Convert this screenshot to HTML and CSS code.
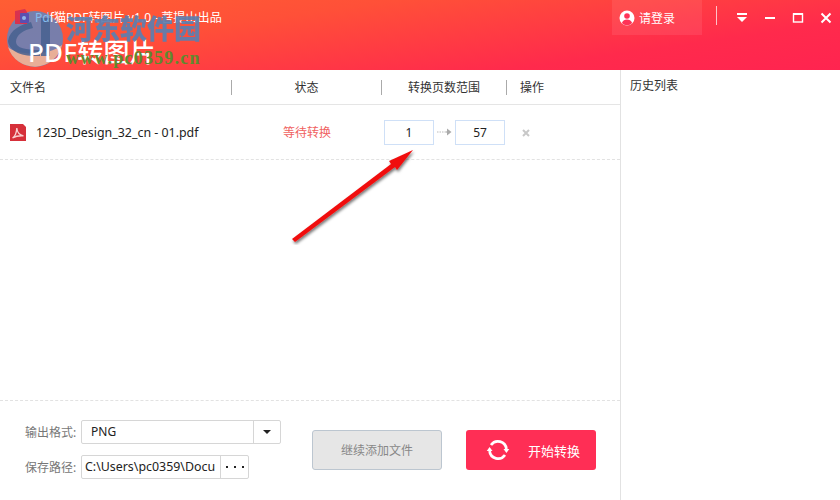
FILE: index.html
```html
<!DOCTYPE html>
<html lang="zh-CN">
<head>
  <meta charset="UTF-8" />
  <title>Pdf猫PDF转图片</title>
  <link rel="stylesheet" href="styles.css">
</head>
<body>
  <div class="window">
    <header class="titlebar">
      <div class="brand">
        <!-- site watermark logo, the app texts show through it -->
        <svg class="wm-logo" width="60" height="60" viewBox="0 0 60 60">
          <circle cx="30" cy="30" r="28" fill="#5a88c4" opacity=".82"/>
          <path d="M3 38c8 8 40 10 54-2A28 28 0 0 1 3 38z" fill="#f8b594" opacity=".88"/>
          <path d="M3 32C5 20 16 16 26 13l2 6C18 21 11 26 11 33c0 6 10 8 24 8v6C16 48 4 42 3 32z" fill="#46608f" opacity=".85"/>
          <rect x="36" y="9" width="9" height="38" fill="#46608f" opacity=".85"/>
        </svg>
        <div class="app-name">
          <svg class="app-icon" width="17" height="18" viewBox="0 0 17 18"><path d="M1 3l10-2 2 3v12H1z" fill="#d8324f"/><rect x="6" y="5" width="9" height="10" rx="1" fill="#5a4fb0"/><circle cx="10" cy="10" r="2" fill="#8fb4e8"/></svg>
          <span><span class="name-tint">Pd</span>f猫PDF转图片 v1.0 - 菩提山出品</span>
        </div>
        <div class="app-title">PDF转图片</div>
      </div>
      <div class="top-actions">
        <div class="login">
          <svg width="16" height="16" viewBox="0 0 16 16"><circle cx="8" cy="8" r="7.5" fill="#fff"/><circle cx="8" cy="6" r="2.8" fill="#ff3357"/><path d="M2.8 13c1-2.6 3-3.6 5.2-3.6s4.200 1 5.200 3.600A7 7 0 0 1 2.800 13z" fill="#ff3357"/></svg>
          <span>请登录</span>
        </div>
        <div class="divider"></div>
        <div class="win-btns">
          <svg width="14" height="14" viewBox="0 0 14 14"><rect x="2" y="2" width="10" height="2" fill="#fff"/><path d="M2 6h10l-5 5z" fill="#fff"/></svg>
          <svg width="14" height="14" viewBox="0 0 14 14"><rect x="2" y="6" width="10" height="2" fill="#fff"/></svg>
          <svg width="14" height="14" viewBox="0 0 14 14"><rect x="2.500" y="3" width="9" height="8" fill="none" stroke="#fff" stroke-width="1.400"/><rect x="2" y="2" width="10" height="2" fill="#fff"/></svg>
          <svg width="14" height="14" viewBox="0 0 14 14"><path d="M2.500 2.500l9 9M11.500 2.500l-9 9" stroke="#fff" stroke-width="2" fill="none"/></svg>
        </div>
      </div>
    </header>

    <div class="content">
      <main class="main">
        <div class="table-head">
          <div class="col-name">文件名</div>
          <div class="col-status">状态</div>
          <div class="col-range">转换页数范围</div>
          <div class="col-op">操作</div>
        </div>
        <div class="file-row">
          <div class="col-name file-name">
            <svg class="pdf-icon" width="16" height="17" viewBox="0 0 16 17"><path d="M0 0h13l3 3v14H0z" fill="#d6303a"/><path d="M2.500 14c2.500-1.500 4-5.500 4.300-10 .3 3.500 2.500 7 6.700 7.800-3.500-.2-7.500.2-11 2.200z" fill="none" stroke="#f9d0d0" stroke-width="1.300"/></svg>
            <span>123D_Design_32_cn - 01.pdf</span>
          </div>
          <div class="col-status waiting">等待转换</div>
          <div class="col-range range">
            <div class="page-box">1</div>
            <svg width="15" height="8" viewBox="0 0 15 8"><path d="M0 4h9" stroke="#bbb" stroke-width="1" stroke-dasharray="1.500 1"/><path d="M9 4h3" stroke="#999"/><path d="M10 .5l4.500 3.500-4.500 3.500z" fill="#aaa"/></svg>
            <div class="page-box">57</div>
          </div>
          <div class="col-op op-cell">
            <svg width="8" height="8" viewBox="0 0 8 8"><path d="M1 1l6 6M7 1l-6 6" stroke="#c8c8c8" stroke-width="2"/></svg>
          </div>
        </div>
        <div class="spacer"></div>
        <div class="footer">
          <div class="fields">
            <div class="field">
              <label>输出格式:</label>
              <div class="select">
                <span class="select-value">PNG</span>
                <span class="select-arrow"></span>
              </div>
            </div>
            <div class="field">
              <label>保存路径:</label>
              <div class="path">
                <span class="path-value">C:\Users\pc0359\Docu</span>
                <span class="path-more">
                  <svg width="18" height="2" viewBox="0 0 18 2"><rect x="0" y="0" width="2" height="2" fill="#222"/><rect x="8" y="0" width="2" height="2" fill="#222"/><rect x="16" y="0" width="2" height="2" fill="#222"/></svg>
                </span>
              </div>
            </div>
          </div>
          <button class="btn-add">继续添加文件</button>
          <button class="btn-start">
            <svg width="24" height="24" viewBox="0 0 24 24"><path d="M5 7A8.500 8.500 0 0 1 20.400 11" fill="none" stroke="#fff" stroke-width="2.700"/><path d="M17.500 11h5.800l-2.900 4z" fill="#fff"/><path d="M3.600 13A8.500 8.500 0 0 0 19 17" fill="none" stroke="#fff" stroke-width="2.700"/><path d="M.7 13h5.800l-2.900-4z" fill="#fff"/></svg>
            <span>开始转换</span>
          </button>
        </div>
      </main>
      <aside class="history">历史列表</aside>
    </div>

    <!-- annotation arrow on top of the screenshot -->
    <svg class="arrow" width="150" height="110" viewBox="0 0 150 110">
      <defs><filter id="soft" x="-20%" y="-20%" width="140%" height="140%"><feDropShadow dx="1" dy="2" stdDeviation="1.500" flood-color="#000" flood-opacity=".55"/></filter></defs>
      <path d="M11 104L110 29L108 26L132 15L116 35L114 32L14 107Z" fill="#f01010" filter="url(#soft)"/>
    </svg>

    <!-- site watermark text -->
    <div class="watermark">
      <div class="wm-name">河东软件园</div>
      <div class="wm-url">www.pc0359.cn</div>
    </div>
  </div>
</body>
</html>
```
FILE: styles.css
```css
* {
  box-sizing: border-box;
  margin: 0;
  padding: 0;
}

body {
  width: 840px;
  height: 500px;
  overflow: hidden;
  background: #fff;
  font-family: "Noto Sans", "Noto Sans CJK SC", sans-serif;
  font-size: 12px;
  color: #333;
}

.window {
  position: relative;
  width: 840px;
  height: 500px;
  display: flex;
  flex-direction: column;
}

.titlebar {
  height: 70px;
  flex: none;
  display: flex;
  justify-content: space-between;
  background: linear-gradient(172deg, #ff5e33 0%, #ff5038 30%, #ff2a4c 75%, #ff2450 100%);
  color: #fff;
}

.brand {
  padding: 7px 0 0 14px;
}

.app-name {
  position: relative;
  display: flex;
  align-items: center;
  gap: 4px;
  height: 20px;
  font-size: 12.100px;
  color: #fff;
}

.name-tint {
  color: #86bdec;
}

.app-title {
  position: relative;
  margin: 9px 0 0 14px;
  font-size: 26px;
  line-height: 32px;
  font-weight: 500;
  letter-spacing: 0.200px;
  color: #fff;
}

.top-actions {
  display: flex;
  align-items: flex-start;
}

.login {
  width: 90px;
  height: 35px;
  padding-left: 7px;
  display: flex;
  align-items: center;
  gap: 4px;
  background: rgba(255, 255, 255, 0.08);
  font-size: 12px;
}

.divider {
  width: 1px;
  height: 19px;
  margin: 6px 0 0 14px;
  background: rgba(255, 255, 255, 0.7);
}

.win-btns {
  display: flex;
  gap: 14px;
  margin: 11px 0 0 18px;
  padding-right: 7px;
}

.content {
  flex: 1;
  display: flex;
  min-height: 0;
}

.main {
  width: 620px;
  display: flex;
  flex-direction: column;
}

.history {
  flex: 1;
  border-left: 1px solid #e2e2e2;
  padding: 7px 0 0 9px;
  line-height: 18px;
}

.table-head {
  height: 35px;
  flex: none;
  display: flex;
  align-items: center;
  border-bottom: 1px solid #e5e5e5;
}

.table-head > div {
  height: 15px;
  line-height: 15px;
  border-right: 1px solid #aaa;
}

.table-head .col-op {
  border-right: none;
  padding-right: 2px;
}

.col-name {
  width: 232px;
  padding-left: 10px;
}

.col-status {
  width: 150px;
  text-align: center;
}

.col-range {
  width: 125px;
  text-align: center;
}

.col-op {
  width: 52px;
  text-align: center;
}

.op-cell {
  padding-right: 14px;
}

.file-row {
  height: 55px;
  flex: none;
  display: flex;
  align-items: center;
  border-bottom: 1px dashed #e2e2e2;
}

.file-name {
  display: flex;
  align-items: center;
  gap: 10px;
  font-size: 12.400px;
  color: #222;
}

.waiting {
  color: #f0625f;
}

.range {
  display: flex;
  align-items: center;
  justify-content: flex-start;
  gap: 3px;
  padding-left: 2px;
}

.page-box {
  width: 50px;
  height: 25px;
  line-height: 23px;
  border: 1px solid #cfe0f7;
  text-align: center;
  color: #222;
}

.spacer {
  flex: 1;
}

.footer {
  height: 100px;
  flex: none;
  display: flex;
  align-items: center;
  border-top: 1px dashed #e2e2e2;
  padding: 0 24px 1px 25px;
}

.fields {
  display: flex;
  flex-direction: column;
  gap: 11px;
  width: 287px;
  margin-top: -1px;
}

.field {
  display: flex;
  align-items: center;
  gap: 4px;
}

.field label {
  width: 52px;
  color: #777;
}

.select {
  width: 200px;
  height: 24px;
  display: flex;
  border: 1px solid #d6d6d6;
  border-radius: 2px;
}

.select-value {
  flex: 1;
  padding-left: 9px;
  line-height: 21px;
  color: #222;
}

.select-arrow {
  width: 27px;
  border-left: 1px solid #d6d6d6;
  position: relative;
}

.select-arrow::after {
  content: "";
  position: absolute;
  left: 9px;
  top: 9px;
  border-left: 4px solid transparent;
  border-right: 4px solid transparent;
  border-top: 4px solid #222;
}

.path {
  width: 168px;
  height: 24px;
  display: flex;
  border: 1px solid #d6d6d6;
  border-radius: 2px;
}

.path-value {
  flex: 1;
  padding-left: 3px;
  line-height: 21px;
  font-size: 12.400px;
  color: #222;
  overflow: hidden;
  white-space: nowrap;
}

.path-more {
  width: 28px;
  flex: none;
  display: flex;
  align-items: center;
  justify-content: center;
  border-left: 1px solid #d6d6d6;
}

.btn-add {
  width: 130px;
  height: 40px;
  border: 1px solid #bcc6d0;
  border-radius: 3px;
  background: #e6e6e6;
  color: #888;
  font: inherit;
}

.btn-start {
  width: 130px;
  height: 40px;
  margin-left: 24px;
  display: flex;
  align-items: center;
  padding-left: 20px;
  gap: 18px;
  border: none;
  border-radius: 3px;
  background: #ff2e55;
  color: #fff;
  font: inherit;
  font-size: 13px;
}

.arrow {
  position: absolute;
  left: 281px;
  top: 135px;
}

.watermark {
  position: absolute;
  left: 0;
  top: 0;
  width: 210px;
  height: 70px;
}

.wm-logo {
  position: absolute;
  left: 5px;
  top: 9px;
}

.wm-name {
  position: absolute;
  left: 66px;
  top: 12px;
  font-family: "Noto Sans CJK SC", sans-serif;
  font-size: 27px;
  line-height: 32px;
  font-weight: 900;
  color: #5c7fb0;
  opacity: 0.92;
}

.wm-url {
  position: absolute;
  left: 66px;
  top: 48px;
  font-family: "Liberation Serif", serif;
  font-size: 18px;
  line-height: 20px;
  font-weight: bold;
  letter-spacing: 1.200px;
  color: #5f8a2e;
}
```
